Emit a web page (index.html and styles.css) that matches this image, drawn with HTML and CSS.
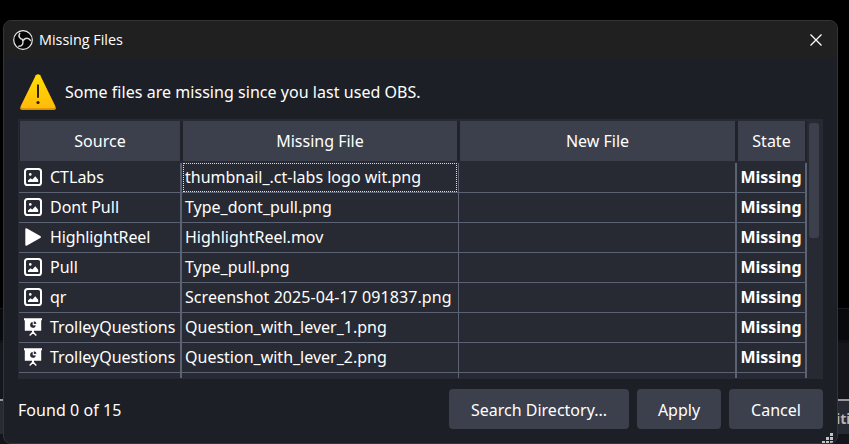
FILE: index.html
```html
<!DOCTYPE html>
<html lang="en">
<head>
<meta charset="utf-8">
<title>Missing Files</title>
<link rel="stylesheet" href="styles.css">
</head>
<body>
<svg class="symbols" width="0" height="0" aria-hidden="true">
  <symbol id="image" viewBox="0 0 18 18"><rect x="1" y="1" width="16" height="16" rx="2.6" fill="none" stroke="#fff" stroke-width="2"/><circle cx="6.300" cy="6.400" r="1.300" fill="#fff"/><path d="M4 14v-1.600l2.500-2.200 1.800 1.300 3-3.300 2.900 3.500V14z" fill="#fff"/></symbol>
  <symbol id="play" viewBox="0 0 18 18"><path d="M1.300 1.500Q1.300-.3 3 .5L16.300 8Q17.600 9 16.300 10L3 17.500Q1.300 18.300 1.300 16.500z" fill="#fff"/></symbol>
  <symbol id="slides" viewBox="0 0 18 18"><path d="M0 .3h18v2h-.8v10.500H10v1.200l2.800 3-.9.900L9.700 16H8.300l-2.200 1.900-.9-.9L8 14v-1.200H.8V2.300H0z" fill="#fff"/><path d="M8.700 4.100A2.900 2.900 0 1 0 11.900 7.500L8.700 7.200z" fill="#272a33"/><path d="M9.800 3.200v2.900l2.700-.3A2.800 2.800 0 0 0 9.800 3.200z" fill="#272a33"/></symbol>
</svg>
<div class="backdrop"><div class="band dark"></div><div class="band panel"></div><div class="band rule"></div><div class="band title">iti</div><div class="band foot"></div></div>
<main class="dialog">
  <header class="titlebar">
    <svg class="logo" viewBox="0 0 20 20"><circle cx="10" cy="10" r="9.300" fill="#050505" stroke="#e8e8e8" stroke-width="1.200"/><g fill="none" stroke="#d8d8d8" stroke-width="1.500" stroke-linecap="round"><path id="arm" d="M10 9.500C6.800 9.300 5 6.300 6.700 3.300"/><use href="#arm" transform="rotate(120 10 10)"/><use href="#arm" transform="rotate(240 10 10)"/></g></svg>
    <h1>Missing Files</h1>
    <svg class="close" viewBox="0 0 12 12"><path d="M.5.5l11 11M11.500.5l-11 11" stroke="#fff" stroke-width="1.300"/></svg>
  </header>
  <div class="notice">
    <svg class="warn" viewBox="0 0 36 36"><defs><linearGradient id="g" x2="0" y2="1"><stop offset="0" stop-color="#ffe000"/><stop offset="1" stop-color="#ffb90c"/></linearGradient></defs><path d="M15.800 1.300Q18-1 20.200 1.300L35.700 33Q36.500 36 33.500 36h-31Q-.5 36 .3 33z" fill="#d99000"/><path d="M15.900 1.500Q18-.7 20.100 1.500L35 32Q35.500 34.300 33 34.300H3Q.5 34.300 1 32z" fill="url(#g)"/><path d="M18 10.500v13.300" stroke="#2d2200" stroke-width="2"/><circle cx="18" cy="28.500" r="1.600" fill="#2d2200"/></svg>
    <p>Some files are missing since you last used OBS.</p>
  </div>
  <section class="files">
    <div class="grid">
      <div class="row head"><span>Source</span><span>Missing File</span><span>New File</span><span>State</span></div>
      <div class="row"><span><svg><use href="#image"/></svg>CTLabs</span><span class="focus">thumbnail_.ct-labs logo wit.png</span><span></span><b>Missing</b></div>
      <div class="row"><span><svg><use href="#image"/></svg>Dont Pull</span><span>Type_dont_pull.png</span><span></span><b>Missing</b></div>
      <div class="row"><span><svg><use href="#play"/></svg><i class="tight">HighlightReel</i></span><span>HighlightReel.mov</span><span></span><b>Missing</b></div>
      <div class="row"><span><svg><use href="#image"/></svg>Pull</span><span>Type_pull.png</span><span></span><b>Missing</b></div>
      <div class="row"><span><svg><use href="#image"/></svg>qr</span><span class="wide">Screenshot 2025-04-17 091837.png</span><span></span><b>Missing</b></div>
      <div class="row"><span><svg><use href="#slides"/></svg>TrolleyQuestions</span><span>Question_with_lever_1.png</span><span></span><b>Missing</b></div>
      <div class="row"><span><svg><use href="#slides"/></svg>TrolleyQuestions</span><span>Question_with_lever_2.png</span><span></span><b>Missing</b></div>
      <div class="row"><span></span><span></span><span></span><b></b></div>
    </div>
    <div class="scroll"></div>
  </section>
  <footer><p>Found 0 of 15</p><button class="search">Search Directory...</button><button class="apply">Apply</button><button class="cancel">Cancel</button></footer>
  <svg class="grip" viewBox="0 0 11 11"><path d="M8 0h3v3H8zM4 4h3v3H4zM8 4h3v3H8zM0 8h3v3H0zM4 8h3v3H4zM8 8h3v3H8z" fill="#c4c4c6"/></svg>
</main>
</body>
</html>
```
FILE: styles.css
```css
* { box-sizing: border-box; }
body { margin: 0; width: 849px; height: 444px; overflow: hidden; background: #000; color: #fff; font: 16px/22px "Noto Sans", "Open Sans", sans-serif; position: relative; }
p, h1 { margin: 0; }
.symbols { position: absolute; }
.backdrop { position: absolute; inset: 308px 0 0; background: #08090c; }
.dark { height: 35px; border-top: 1px solid #17181d; border-bottom: 3px solid #101115; }
.panel { height: 56px; background: #15161b; }
.rule { height: 2px; background: #98989c; }
.title { height: 33px; background: #272a33; color: #b5b5b5; font-weight: bold; font-size: 14px; line-height: 36px; padding-left: 836px; }
.foot { height: 10px; background: #14151a; }
.dialog { position: relative; margin: 20px 0 0 3px; width: 835px; height: 424px; border: 1px solid #343434; border-radius: 8px; background: #1d1f26; overflow: hidden; }
.titlebar { height: 37px; background: #202020; display: flex; align-items: center; padding: 0 15px 0 9px; }
.logo { width: 20px; height: 20px; margin-right: 6px; }
h1 { font: 14.4px/20px "Open Sans", sans-serif; flex: 1; }
.close { width: 12px; height: 12px; }
.notice { height: 61px; display: flex; align-items: center; padding: 7px 0 0 16px; gap: 9px; }
.notice p { letter-spacing: 0.04px; }
.warn { width: 36px; height: 36px; }
.files { margin-left: 14px; width: 805px; height: 260px; background: #272a33; overflow: hidden; display: flex; padding: 2px 4px 0 1px; }
.grid { width: 788px; height: 257px; overflow: hidden; }
.row { display: grid; grid-template-columns: 163px 277px 278px 70px; height: 30px; }
.row > * { border-right: 2px solid #5b6273; border-bottom: 1px solid #5b6273; padding: 0 3px 2px; display: flex; align-items: center; white-space: nowrap; }
.row > :nth-child(2) { border-right-width: 1px; position: relative; }
.row > b { justify-content: center; padding: 0 0 2px; }
.row svg { width: 18px; height: 18px; margin: 0 8px 0 2px; flex: none; }
.tight { font-style: normal; letter-spacing: -0.1px; }
.wide { letter-spacing: 0.07px; }
.focus::after { content: ""; position: absolute; inset: 0 1px 0 1px; border: 1px dotted #dedede; }
.head { height: 42px; padding-bottom: 2px; }
.row.head > * { justify-content: center; background: #3c404d; border: solid #20232a; border-width: 0 2px 0 1px; padding: 0 3px; }
.scroll { width: 10px; height: 115px; margin: 2px 0 0 2px; border-radius: 3px; background: #3c404d; }
footer { display: flex; align-items: center; padding: 10px 14px 0; gap: 8px; }
footer p { margin-right: auto; padding-top: 2px; letter-spacing: 0.05px; }
button { height: 40px; border: 0; border-radius: 4px; padding: 2px 0 0; background: #3c404d; color: #fff; font: inherit; }
.search { width: 180px; }
.apply { width: 84px; }
.cancel { width: 94px; }
.grip { position: absolute; right: 4px; bottom: -1px; width: 11px; height: 11px; }
```
